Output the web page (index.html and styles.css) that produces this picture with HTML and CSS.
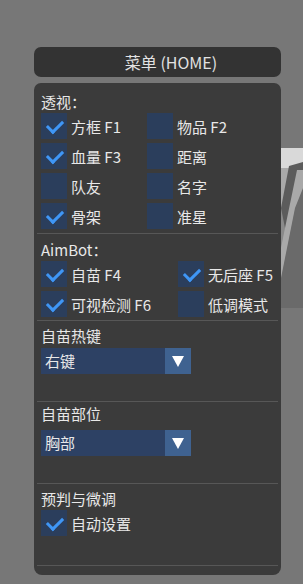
FILE: index.html
```html
<!DOCTYPE html>
<html lang="zh-CN">
<head>
  <meta charset="UTF-8">
  <meta name="viewport" content="width=device-width, initial-scale=1.0">
  <title>菜单</title>
  <link rel="stylesheet" href="styles.css">
</head>
<body>
  <svg class="backdrop" width="22" height="160" viewBox="0 0 22 160">
    <rect x="0" y="0" width="22" height="160" fill="#a9a9a9"/>
    <rect x="0" y="0" width="22" height="20" fill="#d9d9d9"/>
    <polygon points="8,18 22,14 22,22 16,22 4,80 0,80 0,60" fill="#5c5c5c"/>
    <polygon points="14,60 22,40 22,160 0,160 0,130 6,100" fill="#6a6a6a"/>
    <polygon points="0,60 4,80 0,100" fill="#8a8a8a"/>
  </svg>

  <div class="menu">
    <div class="title">菜单 (HOME)</div>

    <div class="panel">
      <section class="section esp">
        <div class="label">透视：</div>
        <div class="grid grid-esp">
          <div class="option"><span class="box checked"></span>方框 F1</div>
          <div class="option"><span class="box"></span>物品 F2</div>
          <div class="option"><span class="box checked"></span>血量 F3</div>
          <div class="option"><span class="box"></span>距离</div>
          <div class="option"><span class="box"></span>队友</div>
          <div class="option"><span class="box"></span>名字</div>
          <div class="option"><span class="box checked"></span>骨架</div>
          <div class="option"><span class="box"></span>准星</div>
        </div>
      </section>

      <section class="section aim">
        <div class="label">AimBot：</div>
        <div class="grid grid-aim">
          <div class="option"><span class="box checked"></span>自苗 F4</div>
          <div class="option"><span class="box checked"></span>无后座 F5</div>
          <div class="option"><span class="box checked"></span>可视检测 F6</div>
          <div class="option"><span class="box"></span>低调模式</div>
        </div>
      </section>

      <section class="section drop">
        <div class="label">自苗热键</div>
        <div class="select">
          <span class="select-text">右键</span>
          <span class="select-arrow"></span>
        </div>
      </section>

      <section class="section drop">
        <div class="label">自苗部位</div>
        <div class="select">
          <span class="select-text">胸部</span>
          <span class="select-arrow"></span>
        </div>
      </section>

      <section class="section last">
        <div class="label">预判与微调</div>
        <div class="option"><span class="box checked"></span>自动设置</div>
      </section>
    </div>
  </div>
</body>
</html>
```

FILE: styles.css
```css
body {
  margin: 0;
  padding: 0;
  background-color: #777;
  font-family: "Noto Sans CJK SC", "Noto Sans", sans-serif;
  font-size: 15px;
  color: #e8e8e8;
  height: 584px;
  overflow: hidden;
  position: relative;
}

.backdrop {
  position: absolute;
  left: 281px;
  top: 148px;
}

.menu {
  position: relative;
  width: 247px;
  margin: 47px 0 0 34px;
}

.title {
  height: 30px;
  line-height: 30px;
  background-color: #333;
  border-radius: 7px;
  text-align: center;
  padding-left: 27px;
  font-size: 16px;
  color: #e2e2e2;
}

.panel {
  margin-top: 6px;
  background-color: #3b3b3b;
  border-radius: 7px 7px 8px 8px;
  padding: 0 3px 6px;
  height: 492px;
  box-sizing: border-box;
}

.section {
  padding: 4px 4px 0;
  border-bottom: 1px solid #575757;
}

.label {
  height: 22px;
  line-height: 22px;
}

.esp {
  padding-top: 8px;
  padding-bottom: 4px;
}

.aim {
  padding-top: 5px;
  padding-bottom: 3px;
}

.drop {
  padding-bottom: 27px;
}

.drop + .drop {
  padding-top: 1px;
  padding-bottom: 27px;
}

.drop + .drop .label {
  margin-bottom: 5px;
}

.last {
  padding-bottom: 29px;
}

.grid {
  display: grid;
  row-gap: 4px;
}

.grid-esp {
  grid-template-columns: 106px 1fr;
}

.grid-aim {
  grid-template-columns: 137px 1fr;
}

.option {
  display: flex;
  align-items: center;
  height: 26px;
  white-space: nowrap;
}

.box {
  width: 26px;
  height: 26px;
  flex: none;
  margin-right: 4px;
  background-color: #2b3e5c;
  position: relative;
}

.box.checked::after {
  content: "";
  position: absolute;
  left: 6px;
  top: 4px;
  width: 13px;
  height: 7px;
  border-left: 3px solid #3f96f5;
  border-bottom: 3px solid #3f96f5;
  transform: rotate(-45deg);
  transform-origin: center;
  margin-top: 3px;
}

.select {
  display: flex;
  width: 150px;
  height: 26px;
  margin-top: 1px;
  background-color: #2d4164;
}

.select-text {
  flex: 1;
  line-height: 26px;
  padding-left: 4px;
}

.select-arrow {
  width: 26px;
  background-color: #3f6290;
  position: relative;
}

.select-arrow::after {
  content: "";
  position: absolute;
  left: 7px;
  top: 8px;
  border-left: 6px solid transparent;
  border-right: 6px solid transparent;
  border-top: 11px solid #fff;
}
```
